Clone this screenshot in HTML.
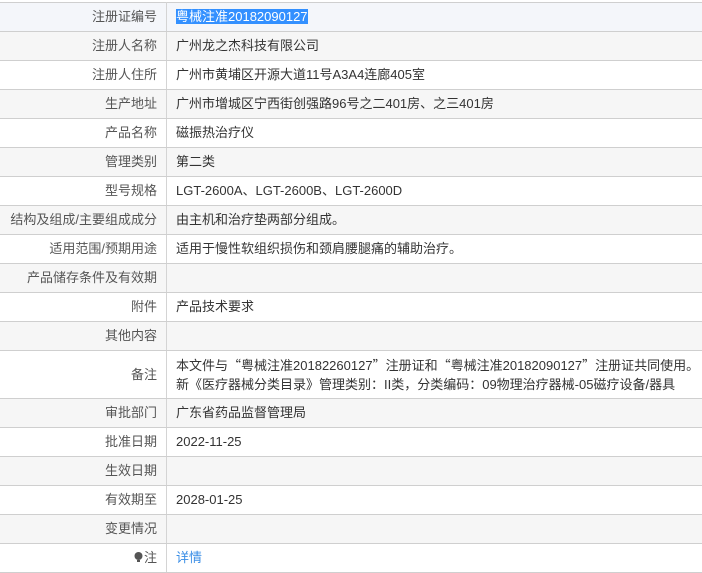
<!DOCTYPE html>
<html><head><meta charset="utf-8"><style>
body{margin:0;width:702px;height:569px;overflow:hidden;background:#fff;font-family:"Liberation Sans","Noto Sans CJK SC",sans-serif;font-size:13px;color:#333}
table{position:absolute;left:0;top:2px;width:702px;border-collapse:collapse}
td{border-top:1px solid #cfcfcf;border-bottom:1px solid #cfcfcf;height:28px;padding:0;line-height:18px}
td.l{width:157px;text-align:right;padding-right:9px;border-right:1px solid #d4d4d4;color:#555}
td.v{padding-left:9px}
tr:nth-child(even){background:#f6f6f6}
tr.h{background:#f4f6fa!important}
.sel{background:#3390ff;color:#fff}
a{color:#3a8ee6;text-decoration:none}
.tall td{height:47px}
.q{font-family:"Noto Sans CJK SC",sans-serif;line-height:1px}
.tv{height:47px;overflow:hidden;line-height:19px;padding-top:5px;box-sizing:border-box}
</style></head><body>
<table>
<tr class="h"><td class="l">注册证编号</td><td class="v"><span class="sel">粤械注准20182090127</span></td></tr>
<tr><td class="l">注册人名称</td><td class="v">广州龙之杰科技有限公司</td></tr>
<tr><td class="l">注册人住所</td><td class="v">广州市黄埔区开源大道11号A3A4连廊405室</td></tr>
<tr><td class="l">生产地址</td><td class="v">广州市增城区宁西街创强路96号之二401房、之三401房</td></tr>
<tr><td class="l">产品名称</td><td class="v">磁振热治疗仪</td></tr>
<tr><td class="l">管理类别</td><td class="v">第二类</td></tr>
<tr><td class="l">型号规格</td><td class="v">LGT-2600A、LGT-2600B、LGT-2600D</td></tr>
<tr><td class="l">结构及组成/主要组成成分</td><td class="v">由主机和治疗垫两部分组成。</td></tr>
<tr><td class="l">适用范围/预期用途</td><td class="v">适用于慢性软组织损伤和颈肩腰腿痛的辅助治疗。</td></tr>
<tr><td class="l">产品储存条件及有效期</td><td class="v"></td></tr>
<tr><td class="l">附件</td><td class="v">产品技术要求</td></tr>
<tr><td class="l">其他内容</td><td class="v"></td></tr>
<tr class="tall"><td class="l">备注</td><td class="v"><div class="tv">本文件与<span class="q">“</span>粤械注准20182260127<span class="q">”</span>注册证和<span class="q">“</span>粤械注准20182090127<span class="q">”</span>注册证共同使用。<br>新《医疗器械分类目录》管理类别：II类，分类编码：09物理治疗器械-05磁疗设备/器具</div></td></tr>
<tr><td class="l">审批部门</td><td class="v">广东省药品监督管理局</td></tr>
<tr><td class="l">批准日期</td><td class="v">2022-11-25</td></tr>
<tr><td class="l">生效日期</td><td class="v"></td></tr>
<tr><td class="l">有效期至</td><td class="v">2028-01-25</td></tr>
<tr><td class="l">变更情况</td><td class="v"></td></tr>
<tr><td class="l"><svg width="9" height="11" viewBox="0 0 9 11" style="vertical-align:-1px;margin-right:1px"><circle cx="4.5" cy="4" r="4" fill="#555"/><rect x="3" y="8" width="3" height="2" fill="#555"/></svg>注</td><td class="v"><a>详情</a></td></tr>
</table>
</body></html>
